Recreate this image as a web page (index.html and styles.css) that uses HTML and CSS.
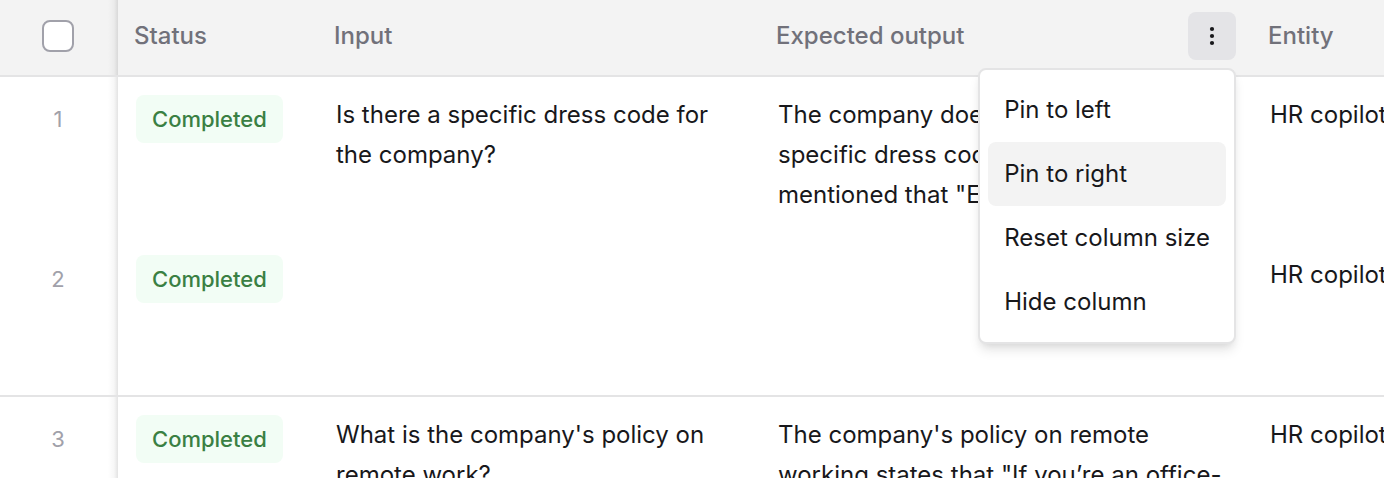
FILE: index.html
```html
<!DOCTYPE html>
<html lang="en">
<head>
<meta charset="utf-8">
<meta name="viewport" content="width=device-width, initial-scale=1">
<title>Dataset</title>
<link rel="stylesheet" href="styles.css">
</head>
<body>
<main class="viewport">
  <table class="grid">
    <colgroup>
      <col class="col-index">
      <col class="col-status">
      <col class="col-input">
      <col class="col-output">
      <col class="col-entity">
    </colgroup>
    <thead>
      <tr>
        <th class="pinned" scope="col"><input class="check" type="checkbox" aria-label="Select all rows"></th>
        <th scope="col">Status</th>
        <th scope="col">Input</th>
        <th scope="col" class="has-menu">
          <div class="head">
            <span>Expected output</span>
            <button class="more" type="button" aria-label="Column options" aria-haspopup="menu" aria-expanded="true">
              <svg viewBox="0 0 24 24" width="24" height="24" aria-hidden="true"><circle cx="12" cy="5" r="2.1"/><circle cx="12" cy="12" r="2.1"/><circle cx="12" cy="19" r="2.1"/></svg>
            </button>
          </div>
          <div class="menu" role="menu">
            <button class="item" type="button" role="menuitem">Pin to left</button>
            <button class="item active" type="button" role="menuitem">Pin to right</button>
            <button class="item" type="button" role="menuitem">Reset column size</button>
            <button class="item" type="button" role="menuitem">Hide column</button>
          </div>
        </th>
        <th scope="col">Entity</th>
      </tr>
    </thead>
    <tbody>
      <tr>
        <td class="pinned">1</td>
        <td><span class="badge">Completed</span></td>
        <td><p class="text">Is there a specific dress code for the company?</p></td>
        <td><p class="text">The company does not currently have a specific dress code. However, it is mentioned that "Employees</p></td>
        <td><p class="text">HR copilot</p></td>
      </tr>
      <tr class="ruled">
        <td class="pinned">2</td>
        <td><span class="badge">Completed</span></td>
        <td></td>
        <td></td>
        <td><p class="text">HR copilot</p></td>
      </tr>
      <tr class="ruled">
        <td class="pinned">3</td>
        <td><span class="badge">Completed</span></td>
        <td><p class="text">What is the company's policy on remote work?</p></td>
        <td><p class="text">The company's policy on remote working states that "If you’re an office-</p></td>
        <td><p class="text">HR copilot</p></td>
      </tr>
    </tbody>
  </table>
</main>
</body>
</html>
```
FILE: styles.css
```css
* {
  box-sizing: border-box;
}

body {
  margin: 0;
  background: #fff;
  color: #18181b;
  font: 400 24px/40px Inter, "Liberation Sans", sans-serif;
}

.viewport {
  height: 100vh;
  overflow: hidden;
}

.grid {
  width: 100%;
  min-width: 1452px;
  table-layout: fixed;
  border-collapse: separate;
  border-spacing: 0;
}

.col-index { width: 118px; }
.col-status { width: 200px; }
.col-input { width: 442px; }
.col-output { width: 492px; }

th {
  height: 77px;
  padding: 0 16px 3px;
  border-bottom: 2px solid #e4e4e5;
  background-color: #f3f3f3;
  color: #71717a;
  font-weight: 500;
  text-align: left;
}

td {
  height: 160px;
  padding: 18px 18px 0;
  vertical-align: top;
}

.ruled td {
  border-bottom: 2px solid #e4e4e5;
}

.pinned {
  padding-left: 0;
  padding-right: 2px;
  background-image: linear-gradient(to left, rgba(0, 0, 0, 0.11), rgba(0, 0, 0, 0.03) 4px, transparent 10px);
  text-align: center;
}

td.pinned {
  color: #a1a1aa;
  font-size: 22px;
  line-height: 48px;
}

.check {
  display: block;
  width: 32px;
  height: 32px;
  margin: 0 auto;
  appearance: none;
  border: 2px solid #a1a1aa;
  border-radius: 8px;
  background: #fff;
}

.has-menu {
  position: relative;
}

.head {
  display: flex;
  align-items: center;
  justify-content: space-between;
}

.more {
  display: grid;
  place-items: center;
  width: 48px;
  height: 48px;
  padding: 0;
  border: 0;
  border-radius: 8px;
  background: #e4e4e7;
  color: #18181b;
}

.more svg {
  fill: currentColor;
}

.menu {
  position: absolute;
  top: 68px;
  right: 16px;
  display: grid;
  padding: 8px;
  border: 2px solid #e4e4e5;
  border-radius: 8px;
  background: #fff;
  box-shadow: 0 8px 12px -2px rgba(0, 0, 0, 0.1), 0 4px 8px -4px rgba(0, 0, 0, 0.1);
}

.item {
  padding: 12px 16px;
  border: 0;
  border-radius: 8px;
  background: transparent;
  color: #18181b;
  font: inherit;
  font-weight: 400;
  text-align: left;
  white-space: nowrap;
}

.item.active {
  background: #f3f3f3;
}

.badge {
  display: inline-block;
  padding: 0 16px;
  border-radius: 8px;
  background: #f2fdf5;
  color: #3a8043;
  font-size: 22px;
  font-weight: 500;
  line-height: 48px;
  vertical-align: top;
}

.text {
  margin: 0;
}
```
